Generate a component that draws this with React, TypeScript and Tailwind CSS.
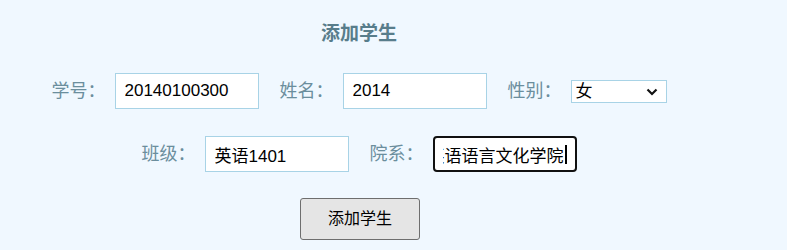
import React, { useEffect, useRef } from "react";

const labelCls =
  "text-[18px] text-[#6b8e9d] mr-[9px] leading-none whitespace-nowrap";
const inputCls =
  "h-[36px] w-[144px] border border-[#a8d3e6] bg-white px-[9px] text-[17px] text-black outline-none";

function Field({ label, children }: { label: string; children: React.ReactNode }) {
  return (
    <div className="flex items-center">
      <span className={labelCls}>{label}</span>
      {children}
    </div>
  );
}

export default function App() {
  const ref = useRef<HTMLInputElement>(null);
  useEffect(() => {
    const el = ref.current;
    if (el) {
      el.focus();
      const n = el.value.length;
      el.setSelectionRange(n, n);
      el.scrollLeft = 10000;
    }
  }, []);

  return (
    <div
      className="w-full h-[250px] bg-[#f0f8ff]"
      style={{ fontFamily: '"Liberation Sans", "Noto Sans CJK SC", sans-serif' }}
    >
      <div className="w-[718px] flex flex-col items-center pt-[22px]">
        <div className="h-[24px] text-[19px] font-bold text-[#587d8b] leading-[24px]">
          添加学生
        </div>
        <div className="mt-[27px] flex items-center gap-[21px]">
          <Field label="学号：">
            <input className={inputCls} defaultValue="20140100300" />
          </Field>
          <Field label="姓名：">
            <input className={inputCls} defaultValue="2014" />
          </Field>
          <Field label="性别：">
            <div className="relative w-[96px] h-[23px] border border-[#a8d3e6] bg-white flex items-center">
              <span className="pl-[4px] text-[17px] text-black leading-none">女</span>
              <svg
                className="absolute right-[8px] top-[7px]"
                width="12"
                height="8"
                viewBox="0 0 12 8"
              >
                <path d="M1.5 1.5 L6 6 L10.5 1.5" fill="none" stroke="#111" strokeWidth="2.2" />
              </svg>
            </div>
          </Field>
        </div>
        <div className="mt-[27px] flex items-center gap-[21px]">
          <Field label="班级：">
            <input className={inputCls} defaultValue="英语1401" />
          </Field>
          <Field label="院系：">
            <div className="relative">
              <input
                ref={ref}
                className="h-[36px] w-[144px] border-2 border-[#111] rounded-[4px] bg-white pl-[8px] pr-[11px] text-[17px] text-black outline-none caret-transparent"
                defaultValue="英语语言文化学院"
              />
              <span className="absolute right-[10px] top-[9px] w-[2px] h-[19px] bg-black" />
            </div>
          </Field>
        </div>
        <button className="mt-[26px] ml-[2px] w-[120px] h-[42px] bg-[#e5e5e5] border border-[#6e6e6e] rounded-[3px] text-[16px] text-black">
          添加学生
        </button>
      </div>
    </div>
  );
}
